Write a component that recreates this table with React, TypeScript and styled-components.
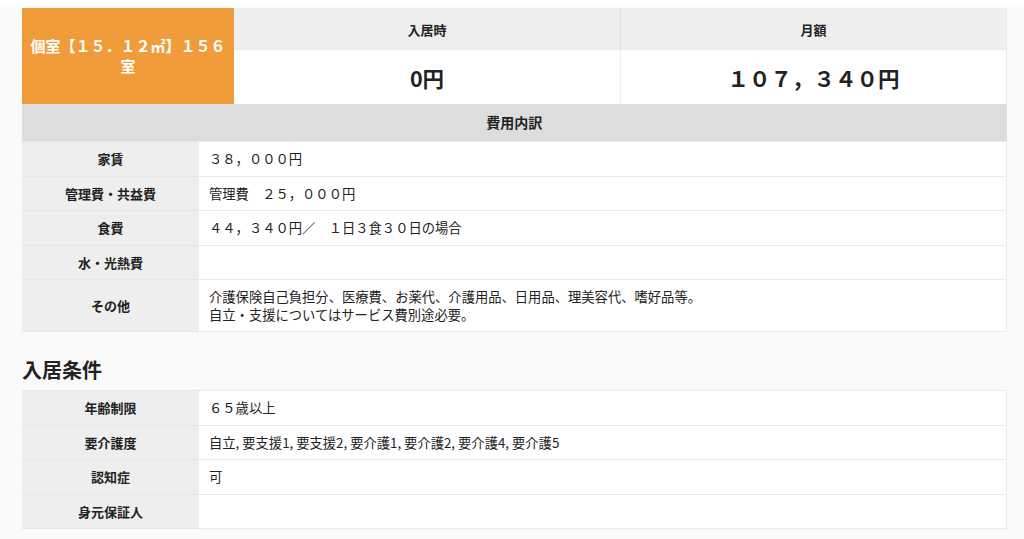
import React from 'react';
import styled, { createGlobalStyle } from 'styled-components';

const GlobalStyle = createGlobalStyle`
  html, body {
    margin: 0;
    padding: 0;
    background: #fafafa;
  }
  body {
    font-family: "Noto Sans CJK JP", "Noto Sans", sans-serif;
    color: #222;
  }
`;

const TopStrip = styled.div`
  height: 7px;
  background: #fff;
`;

const Page = styled.div`
  padding: 1px 17px 10px 22px;
`;

const PriceGrid = styled.div`
  display: grid;
  grid-template-columns: 212px 1fr 1fr;
  grid-template-rows: 42px 54px;
  border-right: 1px solid #ebebeb;
`;

const RoomCell = styled.div`
  grid-row: 1 / span 2;
  background: #f19c3b;
  color: #fff;
  font-weight: 700;
  font-size: 15px;
  line-height: 20px;
  display: flex;
  align-items: center;
  justify-content: center;
  text-align: center;
  padding: 0 4px;
`;

const PriceHead = styled.div<{ $last?: boolean }>`
  background: #eeeeee;
  font-size: 13px;
  font-weight: 700;
  display: flex;
  align-items: center;
  justify-content: center;
  border-left: ${(p) => (p.$last ? '1px solid #e2e2e2' : 'none')};
`;

const PriceValue = styled.div<{ $last?: boolean }>`
  background: #fff;
  font-size: 21.5px;
  font-weight: 700;
  display: flex;
  align-items: center;
  justify-content: center;
  border-left: ${(p) => (p.$last ? '1px solid #eeeeee' : 'none')};
`;

const Table = styled.table`
  width: 100%;
  border-collapse: collapse;
  font-size: 13px;
  line-height: 17.5px;
`;

const GroupHead = styled.th`
  background: #dddddd;
  font-size: 14px;
  font-weight: 700;
  height: 37px;
  padding: 0;
  text-align: center;
`;

const Label = styled.th`
  width: 157px;
  background: #eeeeee;
  font-weight: 700;
  text-align: center;
  padding: 8px 10px;
  border-top: 1px solid #e6e6e6;
  border-bottom: 1px solid #e6e6e6;
`;

const Value = styled.td`
  background: #fff;
  font-size: 13.3px;
  padding: 8px 10px;
  border: 1px solid #ebebeb;
  border-left: none;
  height: 17.5px;
`;

const Heading = styled.h2`
  margin: 24px 0 6px;
  font-size: 20px;
  line-height: 28px;
  font-weight: 700;
  color: #222;
`;

const costs: [string, React.ReactNode][] = [
  ['家賃', '３８，０００円'],
  ['管理費・共益費', '管理費　２５，０００円'],
  ['食費', '４４，３４０円／　１日３食３０日の場合'],
  ['水・光熱費', ''],
  [
    'その他',
    <>
      介護保険自己負担分、医療費、お薬代、介護用品、日用品、理美容代、嗜好品等。
      <br />
      自立・支援についてはサービス費別途必要。
    </>,
  ],
];

const conditions: [string, string][] = [
  ['年齢制限', '６５歳以上'],
  ['要介護度', '自立, 要支援1, 要支援2, 要介護1, 要介護2, 要介護4, 要介護5'],
  ['認知症', '可'],
  ['身元保証人', ''],
];

export default function App() {
  return (
    <>
      <GlobalStyle />
      <TopStrip />
      <Page>
        <PriceGrid>
          <RoomCell>個室【１５．１２㎡】１５６室</RoomCell>
          <PriceHead>入居時</PriceHead>
          <PriceHead $last>月額</PriceHead>
          <PriceValue>0円</PriceValue>
          <PriceValue $last>１０７，３４０円</PriceValue>
        </PriceGrid>
        <Table>
          <tbody>
            <tr>
              <GroupHead colSpan={2}>費用内訳</GroupHead>
            </tr>
            {costs.map(([k, v]) => (
              <tr key={k}>
                <Label>{k}</Label>
                <Value>{v}</Value>
              </tr>
            ))}
          </tbody>
        </Table>
        <Heading>入居条件</Heading>
        <Table>
          <tbody>
            {conditions.map(([k, v]) => (
              <tr key={k}>
                <Label>{k}</Label>
                <Value>{v}</Value>
              </tr>
            ))}
          </tbody>
        </Table>
      </Page>
    </>
  );
}
